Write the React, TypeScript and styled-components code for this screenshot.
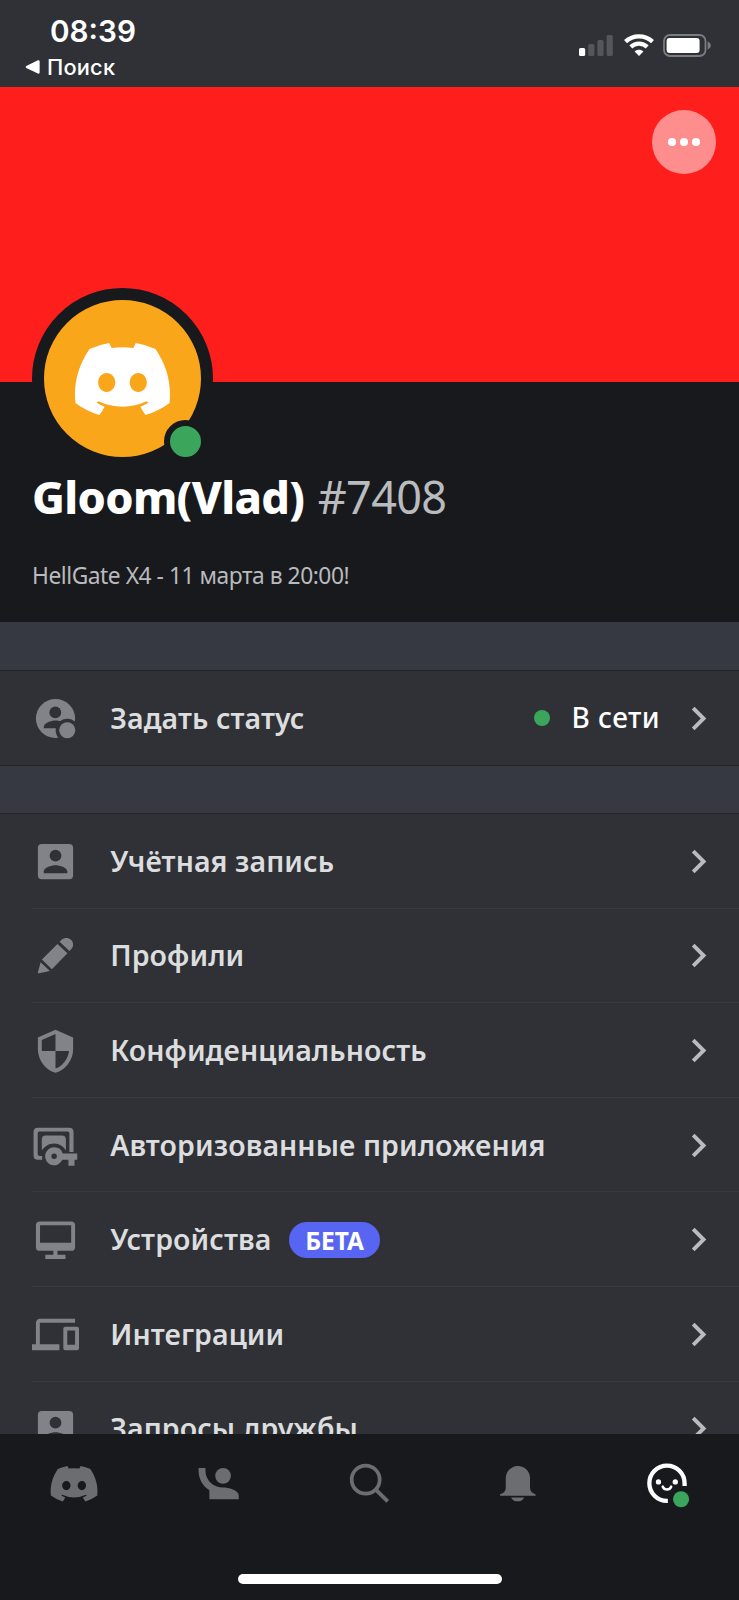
import React from 'react';
import styled, { createGlobalStyle } from 'styled-components';

const GlobalStyle = createGlobalStyle`
  * { box-sizing: border-box; }
  body {
    margin: 0;
    background: #18191c;
    font-family: 'Noto Sans', sans-serif;
  }
`;

const Screen = styled.main`
  width: 739px;
  height: 1600px;
  display: flex;
  flex-direction: column;
  overflow: hidden;
  background: #18191c;
`;

/* Status bar */

const StatusBar = styled.header`
  flex: none;
  height: 87px;
  display: flex;
  justify-content: space-between;
  padding: 13px 28px 0 25px;
  background: #2f3136;
  color: #fff;
  font-family: Inter, sans-serif;
`;

const ClockColumn = styled.div`
  display: flex;
  flex-direction: column;
`;

const Clock = styled.time`
  padding-left: 25px;
  font-size: 29.7px;
  font-weight: 600;
  line-height: 36px;
`;

const BackLink = styled.div`
  display: flex;
  align-items: center;
  gap: 6px;
  margin-top: 5px;
  font-size: 21.8px;
  font-weight: 500;
  line-height: 26px;
  letter-spacing: 0.2px;
`;

const Indicators = styled.div`
  display: flex;
  gap: 9.5px;
  padding-top: 21px;
  height: 44px;
`;

/* Profile */

const Banner = styled.section`
  flex: none;
  height: 295px;
  display: flex;
  justify-content: flex-end;
  align-items: flex-start;
  padding: 23px 23.5px 0 0;
  background: #fe1f1d;
`;

const MoreButton = styled.button`
  width: 63.5px;
  height: 63.5px;
  display: flex;
  align-items: center;
  justify-content: center;
  gap: 4px;
  padding: 0;
  border: 0;
  border-radius: 50%;
  background: #fe8e8e;
`;

const MoreDot = styled.span`
  width: 8px;
  height: 8px;
  border-radius: 50%;
  background: #fff;
`;

const Profile = styled.section`
  flex: none;
  position: relative;
  height: 240px;
  padding: 83px 32px 0;
  background: #18191c;
`;

const Avatar = styled.div`
  position: absolute;
  left: 32px;
  top: -94px;
  width: 181px;
  height: 181px;
  display: flex;
  align-items: center;
  justify-content: center;
  border: 12px solid #18191c;
  border-radius: 50%;
  background: #faa61a;
`;

const Presence = styled.span`
  position: absolute;
  right: -6px;
  bottom: -6px;
  width: 43px;
  height: 43px;
  border: 6px solid #18191c;
  border-radius: 50%;
  background: #3ba55c;
`;

const NameLine = styled.h1`
  display: flex;
  align-items: baseline;
  gap: 13.5px;
  margin: 0;
  font-size: 45px;
  line-height: 64px;
  white-space: nowrap;
`;

const UserName = styled.span`
  color: #fff;
  font-weight: 800;
  letter-spacing: -0.65px;
`;

const Tag = styled.span`
  color: #b9bbbe;
  font-weight: 400;
  letter-spacing: -0.7px;
`;

const About = styled.p`
  margin: 31px 0 0;
  color: #b9bbbe;
  font-size: 22.8px;
  line-height: 32px;
  letter-spacing: -0.47px;
  white-space: nowrap;
`;

/* Settings list */

const Settings = styled.div`
  flex: 1;
  min-height: 0;
  overflow: hidden;
  background: #2f3136;
`;

const SectionGap = styled.div<{ $height: number }>`
  height: ${(p) => p.$height}px;
  background: #363941;
`;

const Section = styled.ul`
  margin: 0;
  padding: 0;
  list-style: none;
  border-top: 1px solid #232529;
`;

const StatusSection = styled(Section)`
  border-bottom: 1px solid #232529;
`;

const Row = styled.li<{ $divided?: boolean }>`
  position: relative;
  height: ${(p) => (p.$divided ? 94.6 : 94)}px;
  display: flex;
  align-items: center;
  padding: 0 17px 0 31.7px;

  &::after {
    content: '';
    display: ${(p) => (p.$divided ? 'block' : 'none')};
    position: absolute;
    left: 32px;
    right: 0;
    bottom: 0;
    height: 1px;
    background: #383a41;
  }
`;

const Label = styled.span`
  margin: -1px 0 0 31.5px;
  color: #dcddde;
  font-size: 28.5px;
  font-weight: 600;
  line-height: 40px;
  letter-spacing: 0.08px;
  white-space: nowrap;
`;

const BetaBadge = styled.span`
  height: 36px;
  margin-left: 18px;
  padding: 0 16px;
  border-radius: 18px;
  background: #5865f2;
  color: #fff;
  font-size: 24.5px;
  font-weight: 700;
  line-height: 37px;
  letter-spacing: -0.1px;
`;

const Trailing = styled.span`
  display: flex;
  align-items: center;
  margin-left: auto;
`;

const StatusDot = styled.span`
  width: 16px;
  height: 16px;
  border-radius: 50%;
  background: #3ba55c;
`;

const StatusText = styled.span`
  margin: -3px 15px 0 21.5px;
  color: #fff;
  font-size: 28px;
  font-weight: 500;
  line-height: 40px;
  letter-spacing: 0.4px;
`;

const Glyph = styled.svg<{ $tone?: string }>`
  flex: none;
  display: block;
  width: 47px;
  height: 47px;
  overflow: visible;
  color: ${(p) => p.$tone ?? '#818388'};
`;

/* Bottom navigation */

const TabBar = styled.nav`
  flex: none;
  height: 166px;
  display: flex;
  flex-direction: column;
  align-items: center;
  justify-content: space-between;
  padding: 26px 0 16px;
  background: #18191c;
`;

const Tabs = styled.div`
  width: 100%;
  display: grid;
  grid-template-columns: repeat(5, 1fr);
  justify-items: center;
`;

const HomeIndicator = styled.div`
  width: 264px;
  height: 10px;
  border-radius: 5px;
  background: #fff;
`;

type IconProps = { tone?: string; children: React.ReactNode };

const Icon = ({ tone, children }: IconProps) => (
  <Glyph $tone={tone} viewBox="0 0 24 24" fill="currentColor">
    {children}
  </Glyph>
);

const DISCORD_PATH =
  'M107.7,8.07A105.15,105.15,0,0,0,81.47,0a72.06,72.06,0,0,0-3.36,6.83A97.68,97.68,0,0,0,49,6.83,72.37,72.37,0,0,0,45.64,0,105.89,105.89,0,0,0,19.39,8.09C2.79,32.65-1.71,56.6.54,80.21h0A105.73,105.73,0,0,0,32.71,96.36,77.7,77.7,0,0,0,39.6,85.25a68.42,68.42,0,0,1-10.85-5.18c.91-.66,1.8-1.34,2.66-2a75.57,75.57,0,0,0,64.32,0c.87.71,1.76,1.39,2.66,2a68.68,68.68,0,0,1-10.87,5.19,77,77,0,0,0,6.89,11.1A105.25,105.25,0,0,0,126.6,80.22h0C129.24,52.84,122.09,29.11,107.7,8.07ZM42.45,65.69C36.18,65.69,31,60,31,53s5-12.74,11.43-12.74S54,46,53.89,53,48.84,65.69,42.45,65.69Zm42.24,0C78.41,65.69,73.25,60,73.25,53s5-12.74,11.44-12.74S96.23,46,96.12,53,91.08,65.69,84.69,65.69Z';

const DiscordMark = ({ width, color }: { width: number; color: string }) => (
  <svg width={width} height={(width * 96.36) / 127.14} viewBox="0 0 127.14 96.36" fill={color}>
    <path d={DISCORD_PATH} />
  </svg>
);

const BACKDROP = '#2f3136';

const StatusIcon = () => (
  <Icon>
    <circle cx="12" cy="12" r="10" />
    <circle cx="11.9" cy="8.9" r="3" fill={BACKDROP} />
    <path d="M6 17v-.6C6 14.2 9.8 13 12 13s6 1.2 6 3.4v.6z" fill={BACKDROP} />
    <circle cx="18" cy="18" r="5.9" fill={BACKDROP} />
    <circle cx="18" cy="18" r="4.1" />
  </Icon>
);

const AccountIcon = () => (
  <Icon>
    <rect x="3" y="3" width="18" height="18" rx="2" />
    <circle cx="12" cy="9" r="3" fill={BACKDROP} />
    <path d="M6 18v-1c0-2 4-3.1 6-3.1s6 1.1 6 3.1v1z" fill={BACKDROP} />
  </Icon>
);

const PencilIcon = () => (
  <Icon>
    <path d="M13 6.1 18.1 10.9 10.15 19 5.05 14.1z" />
    <path d="M4.4 15.4 9.1 19.9 3.6 21.1Q2.9 21.2 3 20.5z" />
    <path d="M14.1 5 15.1 4C16.6 2.7 18.6 2.7 19.9 4 21.3 5.4 21.4 7.4 20 8.8L19.1 9.7z" />
  </Icon>
);

const ShieldIcon = () => (
  <Icon>
    <path
      fillRule="evenodd"
      d="M12 1.4 3 5.3v6.1c0 5.5 3.84 10.7 9 12 5.16-1.3 9-6.5 9-12V5.3zM12 3.6V12.2H5V6.6zM12 12.2H18.9C18.4 16.3 15.7 19.9 12 21.2z"
    />
  </Icon>
);

const AppsIcon = () => (
  <Icon>
    <path d="M3 2.9H19Q21.2 2.9 21.2 5.1V15.3H19.1V5.8Q19.1 4.9 18.2 4.9H3.8Q2.9 4.9 2.9 5.8V16.4Q2.9 17.3 3.8 17.3H5.2V19.3H3Q.8 19.3.8 17.1V5.1Q.8 2.9 3 2.9z" />
    <path d="M7 6.9H15.3Q17.3 6.9 17.3 8.9V14.6C16.2 12.5 13.9 11 11.3 11S6.4 12.4 5 14.6V8.9Q5 6.9 7 6.9z" />
    <path
      fillRule="evenodd"
      d="M11.3 12.9A4.6 4.6 0 0 1 15.7 16.1H23.1V19.3H21.7V22.4H18.6V19.3H15.5A4.6 4.6 0 1 1 11.3 12.9zM11.3 16.1A1.4 1.4 0 1 0 11.3 18.9 1.4 1.4 0 1 0 11.3 16.1z"
    />
  </Icon>
);

const MonitorIcon = () => (
  <Icon>
    <path
      fillRule="evenodd"
      d="M4 2.8H20Q22 2.8 22 4.8V15.8Q22 17.8 20 17.8H13V19.8H17.1V21.9H6.8V19.8H10.9V17.8H4Q2 17.8 2 15.8V4.8Q2 2.8 4 2.8zM4.1 4.7V13.7H20V4.7z"
    />
  </Icon>
);

const DevicesIcon = () => (
  <Icon>
    <path d="M4 6h18V4H4c-1.1 0-2 .9-2 2v11H0v3h14v-3H4V6zm19 2h-6c-.55 0-1 .45-1 1v10c0 .55.45 1 1 1h6c.55 0 1-.45 1-1V9c0-.55-.45-1-1-1zm-1 9.2h-4v-7.2h4v7.2z" />
  </Icon>
);

const Chevron = () => (
  <Icon tone="#b9bbbe">
    <path d="M10 6 8.59 7.41 13.17 12l-4.58 4.59L10 18l6-6z" />
  </Icon>
);

const TAB_TONE = '#6c6d71';

const FriendsIcon = () => (
  <Icon tone={TAB_TONE}>
    <g transform="translate(-.2 4.1)">
      <path d="M.5 0V1.5C.5 5.65 2.71 9.28 6 11.3V16H21V14C21 11.34 15.67 10 13 10 8 10 4 6 4 1.5V0z" />
      <circle cx="13" cy="4" r="4" />
    </g>
  </Icon>
);

const SearchIcon = () => (
  <Icon tone={TAB_TONE}>
    <circle cx="10.05" cy="10.05" r="7.15" fill="none" stroke="currentColor" strokeWidth="1.9" />
    <path d="M15.3 15.3 21.3 21.1" stroke="currentColor" strokeWidth="2" />
  </Icon>
);

const BellIcon = () => (
  <Icon tone={TAB_TONE}>
    <path d="M12.2 3.1C8.8 3.1 6 5.9 6 9.2V14.2C6 15.9 4.9 17.1 3.1 17.5V18.2H21.2V17.5C19.5 17.1 18.4 15.9 18.4 14.2V9.2C18.4 5.9 15.6 3.1 12.2 3.1z" />
    <path d="M8.7 19.1H15.4C14.8 20.4 13.6 21.1 12.1 21.1S9.3 20.4 8.7 19.1z" />
  </Icon>
);

const ProfileIcon = () => (
  <Icon tone="#fff">
    <path
      d="M13.2 20.9H12.75A9 9 0 1 1 21.75 11.9V13.3"
      fill="none"
      stroke="currentColor"
      strokeWidth="2.2"
    />
    <circle cx="8.4" cy="11.2" r="1.35" />
    <circle cx="17" cy="11.2" r="1.35" />
    <path
      d="M10.6 13.6C11.4 15.5 14.1 15.5 14.9 13.6"
      fill="none"
      stroke="currentColor"
      strokeWidth="1.3"
      strokeLinecap="round"
    />
    <circle cx="19.95" cy="20.05" r="4.1" fill="#3ba55c" />
  </Icon>
);

const SignalIcon = () => (
  <svg width="35" height="23" viewBox="0 0 35 23">
    <rect x="0" y="14" width="6.2" height="8" rx="1.6" fill="#fff" />
    <g fill="#55565b">
      <rect x="9.2" y="10" width="6.2" height="12" rx="1.6" />
      <rect x="18.4" y="6" width="6.2" height="16" rx="1.6" />
      <rect x="27.6" y="1" width="6.2" height="21" rx="1.6" />
    </g>
  </svg>
);

const WifiIcon = () => (
  <svg width="30" height="23" viewBox="0 0 30 23" fill="none" stroke="#fff">
    <path d="M1.5 7.6C9 .5 21 .5 28.5 7.6" strokeWidth="4.2" />
    <path d="M6.8 12.9C11.4 8.6 18.6 8.6 23.2 12.9" strokeWidth="4.2" />
    <path d="M10.6 17.6C13 15.2 17 15.2 19.4 17.6L15 22z" fill="#fff" stroke="none" />
  </svg>
);

const BatteryIcon = () => (
  <svg width="48" height="23" viewBox="0 0 48 23">
    <rect x="1" y="1" width="41.5" height="21" rx="6" fill="none" stroke="#7b7c80" strokeWidth="1.8" />
    <rect x="3.6" y="4" width="33" height="15" rx="3" fill="#fff" />
    <path d="M44.6 7.6C46.6 8.3 47.8 9.7 47.8 11.5S46.6 14.7 44.6 15.4z" fill="#7b7c80" />
  </svg>
);

const BackArrow = () => (
  <svg width="16" height="14" viewBox="0 0 16 14" fill="#fff">
    <path d="M1.3 6 12.9.3Q14.6-.2 14.6 1.4V12.6Q14.6 14.1 12.9 13.6L1.3 8Q.2 7 1.3 6z" />
  </svg>
);

const rows = [
  { label: 'Учётная запись', icon: <AccountIcon /> },
  { label: 'Профили', icon: <PencilIcon /> },
  { label: 'Конфиденциальность', icon: <ShieldIcon /> },
  { label: 'Авторизованные приложения', icon: <AppsIcon /> },
  { label: 'Устройства', icon: <MonitorIcon />, badge: 'БЕТА' },
  { label: 'Интеграции', icon: <DevicesIcon /> },
  { label: 'Запросы дружбы', icon: <AccountIcon /> },
];

export default function App() {
  return (
    <>
      <GlobalStyle />
      <Screen>
        <StatusBar>
          <ClockColumn>
            <Clock>08:39</Clock>
            <BackLink>
              <BackArrow />
              Поиск
            </BackLink>
          </ClockColumn>
          <Indicators>
            <SignalIcon />
            <WifiIcon />
            <BatteryIcon />
          </Indicators>
        </StatusBar>

        <Banner>
          <MoreButton aria-label="Ещё">
            <MoreDot />
            <MoreDot />
            <MoreDot />
          </MoreButton>
        </Banner>

        <Profile>
          <Avatar>
            <DiscordMark width={95} color="#fff" />
            <Presence />
          </Avatar>
          <NameLine>
            <UserName>Gloom(Vlad)</UserName>
            <Tag>#7408</Tag>
          </NameLine>
          <About>HellGate X4 - 11 марта в 20:00!</About>
        </Profile>

        <Settings>
          <SectionGap $height={48} />
          <StatusSection>
            <Row>
              <StatusIcon />
              <Label>Задать статус</Label>
              <Trailing>
                <StatusDot />
                <StatusText>В сети</StatusText>
                <Chevron />
              </Trailing>
            </Row>
          </StatusSection>
          <SectionGap $height={47} />
          <Section>
            {rows.map((row) => (
              <Row key={row.label} $divided>
                {row.icon}
                <Label>{row.label}</Label>
                {row.badge && <BetaBadge>{row.badge}</BetaBadge>}
                <Trailing>
                  <Chevron />
                </Trailing>
              </Row>
            ))}
          </Section>
        </Settings>

        <TabBar>
          <Tabs>
            <Icon tone={TAB_TONE}>
              <path transform="translate(.35 3.1) scale(.188)" d={DISCORD_PATH} />
            </Icon>
            <FriendsIcon />
            <SearchIcon />
            <BellIcon />
            <ProfileIcon />
          </Tabs>
          <HomeIndicator />
        </TabBar>
      </Screen>
    </>
  );
}
